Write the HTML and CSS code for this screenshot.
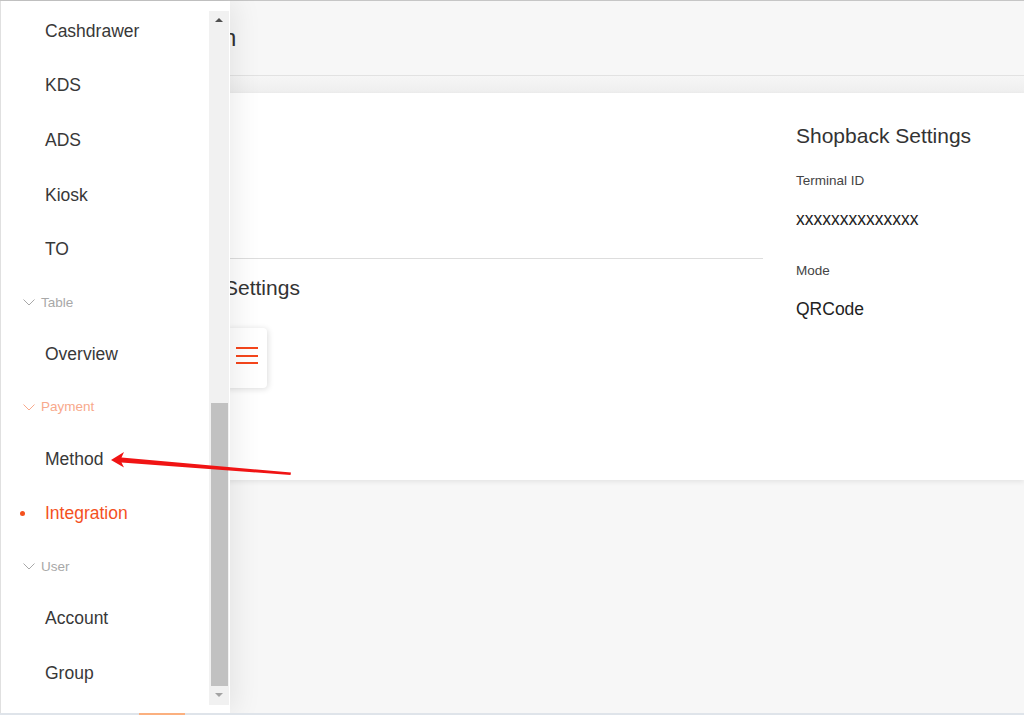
FILE: index.html
```html
<!DOCTYPE html>
<html lang="en">
<head>
  <meta charset="UTF-8">
  <meta name="viewport" content="width=device-width, initial-scale=1.0">
  <title>Payment Integration</title>
  <link rel="stylesheet" href="styles.css">
</head>
<body>
  <div class="frame">
    <div class="page-header">
      <h1 class="page-title">Integration</h1>
    </div>
    <div class="header-shade"></div>

    <div class="card">
      <div class="col-left">
        <div class="section section-top"></div>
        <div class="section">
          <h2 class="section-title">Settings</h2>
          <button class="menu-btn">
            <span></span><span></span><span></span>
          </button>
        </div>
      </div>
      <div class="col-right">
        <h2 class="section-title">Shopback Settings</h2>
        <div class="field">
          <div class="field-label">Terminal ID</div>
          <div class="field-value">xxxxxxxxxxxxxx</div>
        </div>
        <div class="field">
          <div class="field-label">Mode</div>
          <div class="field-value">QRCode</div>
        </div>
      </div>
    </div>

    <div class="spacer"></div>
    <div class="bottom-strip"><span class="strip-accent"></span></div>

    <!-- drawer -->
    <div class="drawer">
      <ul class="menu">
        <li class="menu-item">Cashdrawer</li>
        <li class="menu-item">KDS</li>
        <li class="menu-item">ADS</li>
        <li class="menu-item">Kiosk</li>
        <li class="menu-item">TO</li>
        <li class="menu-group">
          <svg class="chev" width="12" height="7" viewBox="0 0 12 7"><path d="M0.5 0.5 L6 6 L11.5 0.5" fill="none" stroke="currentColor" stroke-width="1"/></svg>
          Table
        </li>
        <li class="menu-item">Overview</li>
        <li class="menu-group open">
          <svg class="chev" width="12" height="7" viewBox="0 0 12 7"><path d="M0.5 0.5 L6 6 L11.5 0.5" fill="none" stroke="currentColor" stroke-width="1"/></svg>
          Payment
        </li>
        <li class="menu-item">Method</li>
        <li class="menu-item active">Integration</li>
        <li class="menu-group">
          <svg class="chev" width="12" height="7" viewBox="0 0 12 7"><path d="M0.5 0.5 L6 6 L11.5 0.5" fill="none" stroke="currentColor" stroke-width="1"/></svg>
          User
        </li>
        <li class="menu-item">Account</li>
        <li class="menu-item">Group</li>
      </ul>
      <div class="scrollbar">
        <div class="sb-btn sb-up"></div>
        <div class="sb-track"><div class="sb-thumb"></div></div>
        <div class="sb-btn sb-down"></div>
      </div>
    </div>

    <!-- annotation arrow -->
    <svg class="annotation" width="1024" height="715" viewBox="0 0 1024 715">
      <polygon points="111,460 124,452 121.5,457.5 291,472.5 290.5,475 121.5,462.5 124,467.5" fill="#f01414"/>
    </svg>
  </div>
</body>
</html>
```

FILE: styles.css
```css
body {
  margin: 0;
  padding: 0;
  font-family: "Liberation Sans", Arial, sans-serif;
  background: #f7f7f7;
  overflow: hidden;
}

.frame {
  position: relative;
  height: 715px;
  box-sizing: border-box;
  border-top: 1px solid #c6c6c6;
  display: flex;
  flex-direction: column;
}

.page-header {
  height: 74px;
  border-bottom: 1px solid #e2e2e2;
  display: flex;
  align-items: center;
  padding-left: 123px;
  background: #f7f7f7;
}

.page-title {
  margin: 0;
  font-size: 24px;
  font-weight: normal;
  color: #333;
}

.header-shade {
  height: 17px;
  background: linear-gradient(#f6f6f6, #eeeeee);
}

.card {
  margin-left: 100px;
  height: 387px;
  background: #fff;
  display: flex;
  box-shadow: 0 2px 5px rgba(0, 0, 0, 0.08);
}

.col-left {
  width: 663px;
}

.section {
  padding: 17px 0 0 124px;
}

.section-top {
  height: 165px;
  padding: 0;
  border-bottom: 1px solid #dddddd;
}

.section-title {
  margin: 0;
  font-size: 21px;
  line-height: 24px;
  font-weight: normal;
  color: #333;
}

.menu-btn {
  margin-top: 28px;
  width: 43px;
  height: 60px;
  border: none;
  border-radius: 4px;
  background: #fff;
  box-shadow: 1px 1px 6px rgba(0, 0, 0, 0.14);
  display: flex;
  flex-direction: column;
  align-items: center;
  justify-content: center;
  gap: 5.5px;
  padding: 0 0 5px 3px;
}

.menu-btn span {
  display: block;
  width: 22px;
  height: 2px;
  background: #f5461c;
}

.col-right {
  padding: 31px 0 0 33px;
}

.col-right .section-title {
  margin-bottom: 25px;
}

.field-label {
  font-size: 13.5px;
  line-height: 16px;
  color: #444;
  margin: 1px 0 20px;
}

.field-value {
  font-size: 17.5px;
  line-height: 20px;
  color: #222;
  margin-bottom: 34px;
}

.spacer {
  flex: 1;
}

.bottom-strip {
  height: 2px;
  background: #dfe4ea;
  position: relative;
  z-index: 5;
}

.strip-accent {
  position: absolute;
  left: 139px;
  top: 0;
  width: 46px;
  height: 2px;
  background: #fbb07f;
}

/* drawer */
.drawer {
  position: absolute;
  top: 0;
  left: 0;
  bottom: 2px;
  width: 230px;
  background: #fff;
  border-left: 1px solid #e0e0e0;
  box-sizing: border-box;
  box-shadow: 6px 0 26px rgba(0, 0, 0, 0.08);
  display: flex;
  z-index: 4;
}

.menu {
  list-style: none;
  margin: 0;
  padding: 2.6px 0 0 0;
  flex: 1;
  overflow: hidden;
}

.menu-item {
  position: relative;
  height: 54.7px;
  line-height: 54.7px;
  padding-left: 44px;
  font-size: 17.5px;
  color: #383838;
}

.menu-item.active {
  color: #f4511e;
}

.menu-item.active::before {
  content: "";
  position: absolute;
  left: 19px;
  top: 25px;
  width: 5px;
  height: 5px;
  border-radius: 50%;
  background: #f4511e;
}

.menu-group {
  height: 50px;
  display: flex;
  align-items: center;
  gap: 6px;
  padding-left: 22px;
  font-size: 13.5px;
  color: #a8a8a8;
}

.menu-group.open {
  color: #f8a98c;
}

.chev {
  display: block;
  margin-top: 1px;
}

.scrollbar {
  width: 20px;
  margin: 10px 1px 8px 0;
  background: #f1f1f1;
  display: flex;
  flex-direction: column;
}

.sb-btn {
  height: 17px;
  position: relative;
}

.sb-btn::after {
  content: "";
  position: absolute;
  left: 6px;
  top: 7px;
  border-left: 4px solid transparent;
  border-right: 4px solid transparent;
}

.sb-up::after {
  border-bottom: 4px solid #505050;
}

.sb-down::after {
  top: 5px;
  border-top: 4px solid #a3a3a3;
}

.sb-track {
  flex: 1;
  display: flex;
  flex-direction: column;
  justify-content: flex-end;
  padding: 0 1px 2px 2px;
}

.sb-thumb {
  height: 283px;
  background: #c1c1c1;
}

.annotation {
  position: absolute;
  top: -1px;
  left: 0;
  z-index: 10;
  pointer-events: none;
}
```
